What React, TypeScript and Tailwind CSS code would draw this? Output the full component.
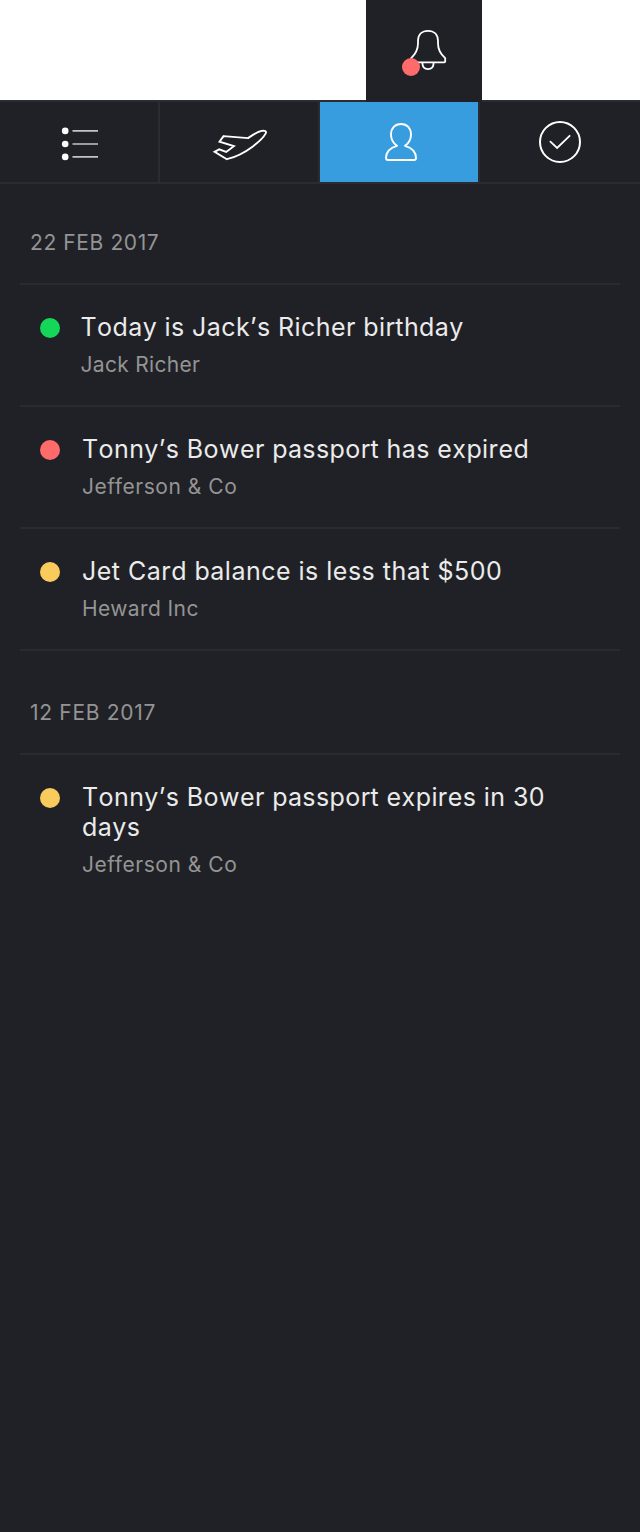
import type { ReactNode } from "react";
import clsx from "clsx";

type Notice = { title: string; titleClass: string; who: string; whoClass: string; dot: string; shift?: boolean };

const groups: { date: string; dateClass: string; items: Notice[] }[] = [
  {
    date: "22 FEB 2017",
    dateClass: "tracking-[0.6px]",
    items: [
      {
        title: "Today is Jack’s Richer birthday",
        titleClass: "tracking-[0.42px]",
        who: "Jack Richer",
        whoClass: "tracking-[0.3px]",
        dot: "bg-[#14d75a]",
        shift: true,
      },
      {
        title: "Tonny’s Bower passport has expired",
        titleClass: "tracking-[0.42px]",
        who: "Jefferson & Co",
        whoClass: "tracking-[0.53px]",
        dot: "bg-[#ff6b6b]",
      },
      {
        title: "Jet Card balance is less that $500",
        titleClass: "tracking-[0.49px]",
        who: "Heward Inc",
        whoClass: "tracking-[0.4px]",
        dot: "bg-[#f9ca5c]",
      },
    ],
  },
  {
    date: "12 FEB 2017",
    dateClass: "tracking-[0.7px]",
    items: [
      {
        title: "Tonny’s Bower passport expires in 30 days",
        titleClass: "tracking-[0.42px]",
        who: "Jefferson & Co",
        whoClass: "tracking-[0.53px]",
        dot: "bg-[#f9ca5c]",
      },
    ],
  },
];

function BellIcon() {
  return (
    <svg width="116" height="100" viewBox="366 0 116 100" fill="none" stroke="#fff" strokeWidth="1.8">
      <path d="M411 62.3H444.2Q445.2 62.3 445.2 61.3V58.2C440 53.6 438 50 438 43.5V41C438 34.6 434 30.8 428 30.8S418 34.6 418 41V43.5C418 50 416 53.6 411 58.4Z" strokeLinejoin="round" />
      <path d="M422.4 63C422.4 67 424.8 69.1 428 69.1S433.6 67 433.6 63" />
      <circle cx="411" cy="67" r="9" fill="#ff6b6b" stroke="none" />
    </svg>
  );
}

function ListIcon() {
  return (
    <svg width="158" height="80" viewBox="0 102 158 80">
      {[130.9, 144, 156.9].map((y) => (
        <circle key={y} cx="65.2" cy={y} r="3.3" fill="#fff" />
      ))}
      <path d="M72.5 130.9H98M72.5 144H98M72.5 156.9H98" stroke="#c4c4c8" strokeWidth="1.7" />
    </svg>
  );
}

function PlaneIcon() {
  return (
    <svg width="158" height="80" viewBox="160 102 158 80" fill="none" stroke="#fff" strokeWidth="1.9">
      <path d="M223.6 136.1L248 138.1C253 134.6 257.5 131.8 261.6 130.9C264.6 130.3 266.8 131 265.7 133.4C262.6 139.3 246.6 154.3 226.9 159.2L214.6 151.9L219.2 149.4L226.2 152L233.9 146.2L219.5 141.7Z" />
    </svg>
  );
}

function PersonIcon() {
  return (
    <svg width="158" height="80" viewBox="320 102 158 80" fill="none" stroke="#fff" strokeWidth="1.9" strokeLinejoin="round">
      <path d="M397 145.8C393.2 143.2 391 139.2 391 134.5C391 128 395 124 401 124S411 128 411 134.5C411 139.2 408.8 143.2 405 145.8C412 147.8 416 152.6 416 158Q416 160 414 160H388Q386 160 386 158C386 152.6 390 147.8 397 145.8Z" />
    </svg>
  );
}

function CheckIcon() {
  return (
    <svg width="160" height="80" viewBox="480 102 160 80" fill="none" stroke="#fff" strokeWidth="2">
      <circle cx="560" cy="142" r="20" />
      <path d="M550.4 141.7L557.1 148L569.6 135.8" strokeWidth="1.8" strokeLinecap="round" />
    </svg>
  );
}

function Tab({ children, active, last, label }: { children: ReactNode; active?: boolean; last?: boolean; label: string }) {
  return (
    <button
      aria-label={label}
      className={clsx("h-20 w-40 shrink-0", active && "bg-[#389ddf] bg-clip-padding", !last && "border-r-2 border-[#2b2c31]")}
    >
      {children}
    </button>
  );
}

function Row({ item }: { item: Notice }) {
  return (
    <li className="flex border-t-2 border-[#2a2b31] pt-[27px] pb-[26px] pl-5">
      <span className={clsx("mt-1.5 size-5 shrink-0 rounded-full", item.dot)} />
      <div className={clsx("w-[490px]", item.shift ? "pl-[20.5px]" : "pl-[22px]")}>
        <p className={clsx("text-[25px] leading-[30px] text-[#ebebeb] [font-kerning:none]", item.titleClass)}>{item.title}</p>
        <p className={clsx("mt-2 text-[21px] leading-[29px] text-[#949494]", item.whoClass)}>{item.who}</p>
      </div>
    </li>
  );
}

export default function App() {
  return (
    <div className="h-[1532px] w-[640px] overflow-hidden bg-[#202126] font-['Inter',sans-serif]">
      <header className="flex h-[100px] bg-white pl-[366px]">
        <div className="w-[116px] bg-[#202126]">
          <BellIcon />
        </div>
      </header>
      <div className="flex h-0.5">
        <div className="w-[366px] bg-[#2b2c31]" />
        <div className="w-[116px]" />
        <div className="flex-1 bg-[#2b2c31]" />
      </div>
      <nav className="flex border-b-2 border-[#2b2c31]">
        <Tab label="List"><ListIcon /></Tab>
        <Tab label="Flights"><PlaneIcon /></Tab>
        <Tab label="People" active><PersonIcon /></Tab>
        <Tab label="Done" last><CheckIcon /></Tab>
      </nav>
      <main className="px-5">
        {groups.map((group, i) => (
          <section key={group.date} className={i > 0 ? "border-t-2 border-[#2a2b31]" : undefined}>
            <h2 className={clsx("pb-[25px] pl-2.5 text-[21px] leading-[30px] text-[#949494]", group.dateClass, i > 0 ? "pt-[47px]" : "pt-11")}>
              {group.date}
            </h2>
            <ul>
              {group.items.map((item) => (
                <Row key={item.title} item={item} />
              ))}
            </ul>
          </section>
        ))}
      </main>
    </div>
  );
}
